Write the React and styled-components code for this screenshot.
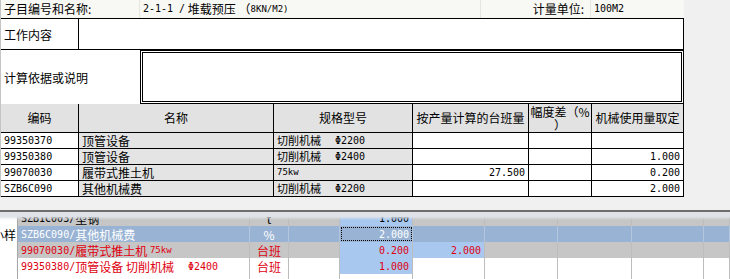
import styled, { createGlobalStyle } from "styled-components";

const MONO = `"DejaVu Sans Mono", "Liberation Mono", monospace`;
const CJK = `"Noto Sans CJK SC", "Noto Sans", sans-serif`;

const GlobalStyle = createGlobalStyle`
  html, body { margin: 0; padding: 0; background: #f0f0f0; }
  body { font-family: ${CJK}; font-size: 12px; color: #000; }
  * { box-sizing: border-box; }
`;

const Page = styled.div`
  width: 730px;
  height: 279px;
  overflow: hidden;
  background: #f0f0f0;
`;

const Dialog = styled.div`
  height: 210px;
  background: #f0f0f0;
`;

const Form = styled.div`
  width: 684px;
  border-left: 1px solid #c4c4c4;
`;

const Lat = styled.span`
  font-family: ${MONO};
  font-size: ${({ size }) => size || 10}px;
`;

/* top bar: 子目编号 / 计量单位 */
const TopBar = styled.div`
  display: grid;
  grid-template-columns: 139px 341px 110px 1fr;
  height: 18px;
  background: #f8f8f4;
`;

const TopCell = styled.div`
  display: flex;
  align-items: center;
  justify-content: ${({ right }) => (right ? "flex-end" : "flex-start")};
  padding: 0 ${({ right }) => (right ? "6px" : "3px")} 0 ${({ right }) => (right ? "0" : "3px")};
  border-right: 1px solid #e6e6de;
  white-space: nowrap;
  line-height: 18px;
  &:last-child { border-right: none; }
`;

const WorkRow = styled.div`
  display: grid;
  grid-template-columns: 78px 1fr;
  height: 32px;
  border-top: 1px solid #000;
  border-right: 1px solid #000;
  border-bottom: 1px solid #000;
  background: #fff;
`;

const Label = styled.div`
  display: flex;
  align-items: center;
  padding-left: 3px;
  border-right: ${({ line }) => (line ? "1px solid #000" : "none")};
`;

const BasisRow = styled.div`
  display: grid;
  grid-template-columns: 139px 1fr;
  height: 54px;
  background: #fff;
`;

const NoteBox = styled.div`
  border: 3px double #000;
  background: #fff;
`;

/* machine table */
const Table = styled.div`
  display: grid;
  grid-template-columns: 78px 195px 139px 116px 63px 1fr;
  grid-auto-rows: 16px;
  grid-template-rows: 29px;
`;

const Head = styled.div`
  display: flex;
  flex-direction: column;
  align-items: center;
  justify-content: ${({ top }) => (top ? "flex-start" : "center")};
  text-align: center;
  line-height: 12px;
  padding-top: ${({ top }) => (top ? "1px" : "0")};
  background: #e2e2e2;
  border-right: 1px solid #000;
  border-bottom: 1px solid #000;
  overflow: hidden;
`;

const HeadLine = styled.span`
  display: block;
  height: 13px;
  line-height: 13px;
`;

const Cell = styled.div`
  display: flex;
  align-items: center;
  justify-content: ${({ num }) => (num ? "flex-end" : "flex-start")};
  padding: 0 3px;
  background: ${({ ro }) => (ro ? "#e4e4e4" : "#fff")};
  border-right: 1px solid #000;
  border-bottom: 1px solid #000;
  white-space: nowrap;
  overflow: hidden;
  line-height: 15px;
  font-size: ${({ small }) => (small ? "11px" : "12px")};
`;

const Phi = styled.span`
  margin-left: ${({ gap }) => gap || 18}px;
  font-family: ${MONO};
  font-size: 10px;
`;

/* grid behind the dialog */
const Splitter = styled.div`
  height: 2px;
  background: #6f6f6f;
`;

const Grid = styled.div`
  position: relative;
  height: 67px;
  overflow: hidden;
  background: #fff;
`;

const Shade = styled.div`
  position: absolute;
  left: 0;
  right: 0;
  top: 0;
  height: 8px;
  background: linear-gradient(#dfe3e8 0%, #dfe3e8 55%, rgba(223, 227, 232, 0) 100%);
  pointer-events: none;
`;

const Rows = styled.div`
  margin-top: -2px;
`;

const toneBg = { sel: "#98b3d3", gray: "#c6c6c6", white: "#fff" };
const toneFg = { sel: "#fff", gray: "#e0000f", white: "#e0000f", black: "#000" };

const GRow = styled.div`
  display: grid;
  grid-template-columns: 18px 232px 39px 51px 73px 72px 73px 74px 72px 1fr;
  height: 16px;
  background: ${({ tone }) => toneBg[tone]};
  color: ${({ fg, tone }) => toneFg[fg || tone]};
`;

const GCell = styled.div`
  display: flex;
  align-items: center;
  justify-content: ${({ align }) =>
    align === "right" ? "flex-end" : align === "center" ? "center" : "flex-start"};
  padding: 0 3px;
  background: ${({ hl }) => (hl ? "#a9c8ef" : "transparent")};
  border-right: 1px solid ${({ sel }) => (sel ? "#b4c6dc" : "#bdbdbd")};
  outline: ${({ focus }) => (focus ? "1px dotted #000" : "none")};
  outline-offset: -2px;
  white-space: nowrap;
  overflow: hidden;
  line-height: 15px;
`;

const Side = styled.div`
  display: flex;
  align-items: center;
  justify-content: flex-end;
  background: #fff;
  color: #000;
  border-right: 1px solid #a8a8a8;
  overflow: hidden;
  white-space: nowrap;
  padding-right: 1px;
`;

const machines = [
  { code: "99350370", name: "顶管设备", spec: "切削机械", phi: "2200", qty: "", diff: "", use: "" },
  { code: "99350380", name: "顶管设备", spec: "切削机械", phi: "2400", qty: "", diff: "", use: "1.000" },
  { code: "99070030", name: "履带式推土机", spec: "75kw", qty: "27.500", diff: "", use: "0.200" },
  { code: "SZB6C090", name: "其他机械费", spec: "切削机械", phi: "2200", qty: "", diff: "", use: "2.000" },
];

const gridRows = [
  { tone: "gray", fg: "black", code: "SZB1C003/", name: "型钢", unit: "t", v1: "1.000", hl: true },
  { tone: "sel", side: "小样", code: "SZB6C090/", name: "其他机械费", unit: "%", v1: "2.000", focus: true },
  { tone: "gray", code: "99070030/", name: "履带式推土机", extra: "75kw", unit: "台班", v1: "0.200", v2: "2.000", hl: true },
  { tone: "white", code: "99350380/", name: "顶管设备 切削机械", phi: "2400", unit: "台班", v1: "1.000", hl: true },
  { tone: "white" },
];

export default function App() {
  return (
    <Page>
      <GlobalStyle />
      <Dialog>
        <Form>
          <TopBar>
            <TopCell>子目编号和名称:</TopCell>
            <TopCell>
              <Lat>2-1-1 / </Lat>&nbsp;堆载预压 （<Lat size={9}>8KN/M2)</Lat>
            </TopCell>
            <TopCell right>计量单位:</TopCell>
            <TopCell><Lat>100M2</Lat></TopCell>
          </TopBar>

          <WorkRow>
            <Label line>工作内容</Label>
            <div />
          </WorkRow>

          <BasisRow>
            <Label>计算依据或说明</Label>
            <NoteBox />
          </BasisRow>

          <Table>
            <Head>编码</Head>
            <Head>名称</Head>
            <Head>规格型号</Head>
            <Head>按产量计算的台班量</Head>
            <Head top>
              <HeadLine>幅度差（%</HeadLine>
              <HeadLine>）</HeadLine>
            </Head>
            <Head>机械使用量取定</Head>
            {machines.map((m) => (
              <>
                <Cell key={m.code + "c"}><Lat>{m.code}</Lat></Cell>
                <Cell ro>{m.name}</Cell>
                <Cell ro small>
                  {m.phi ? m.spec : <Lat size={9}>{m.spec}</Lat>}
                  {m.phi && <Phi gap={14}>Φ{m.phi}</Phi>}
                </Cell>
                <Cell num><Lat>{m.qty}</Lat></Cell>
                <Cell num><Lat>{m.diff}</Lat></Cell>
                <Cell num><Lat>{m.use}</Lat></Cell>
              </>
            ))}
          </Table>
        </Form>
      </Dialog>

      <Splitter />
      <Grid>
        <Rows>
          {gridRows.map((r, i) => (
            <GRow key={i} tone={r.tone} fg={r.fg}>
              <Side>{r.side}</Side>
              <GCell sel={r.tone === "sel"}>
                {r.code && <Lat>{r.code}</Lat>}
                {r.name}
                {r.extra && <>&nbsp;<Lat size={9}>{r.extra}</Lat></>}
                {r.phi && <Phi gap={14}>Φ{r.phi}</Phi>}
              </GCell>
              <GCell align="center" sel={r.tone === "sel"}>{r.unit}</GCell>
              <GCell sel={r.tone === "sel"} />
              <GCell align="right" hl={r.hl} focus={r.focus} sel={r.tone === "sel"}>
                <Lat>{r.v1}</Lat>
              </GCell>
              <GCell align="right" hl={!!r.v2} sel={r.tone === "sel"}>
                <Lat>{r.v2}</Lat>
              </GCell>
              <GCell sel={r.tone === "sel"} />
              <GCell sel={r.tone === "sel"} />
              <GCell sel={r.tone === "sel"} />
              <GCell sel={r.tone === "sel"} />
            </GRow>
          ))}
        </Rows>
        <Shade />
      </Grid>
    </Page>
  );
}
